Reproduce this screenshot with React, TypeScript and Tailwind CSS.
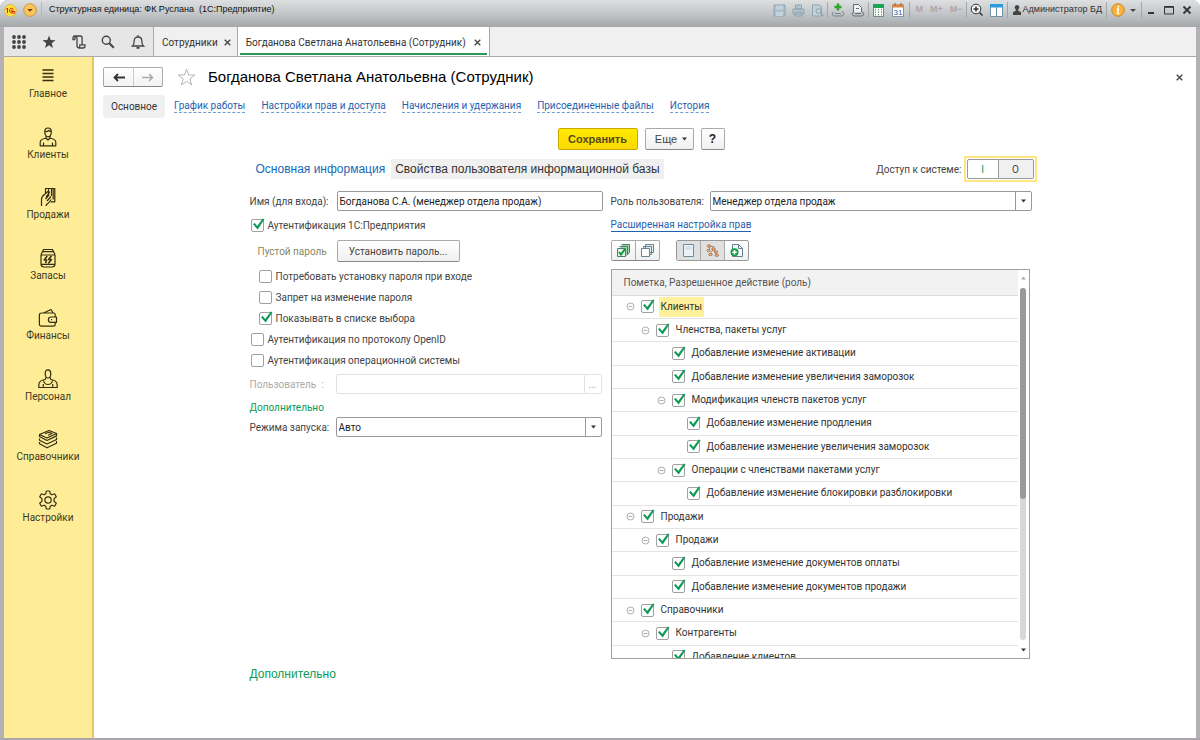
import { useId, useState } from 'react'
import type { ReactNode } from 'react'

type RoleRow = { level: number; text: string; group?: boolean; current?: boolean }

const roleRows: RoleRow[] = [
    { level: 0, text: 'Клиенты', group: true, current: true },
    { level: 1, text: 'Членства, пакеты услуг', group: true },
    { level: 2, text: 'Добавление изменение активации' },
    { level: 2, text: 'Добавление изменение увеличения заморозок' },
    { level: 2, text: 'Модификация членств пакетов услуг', group: true },
    { level: 3, text: 'Добавление изменение продления' },
    { level: 3, text: 'Добавление изменение увеличения заморозок' },
    { level: 2, text: 'Операции с членствами пакетами услуг', group: true },
    { level: 3, text: 'Добавление изменение блокировки разблокировки' },
    { level: 0, text: 'Продажи', group: true },
    { level: 1, text: 'Продажи', group: true },
    { level: 2, text: 'Добавление изменение документов оплаты' },
    { level: 2, text: 'Добавление изменение документов продажи' },
    { level: 0, text: 'Справочники', group: true },
    { level: 1, text: 'Контрагенты', group: true },
    { level: 2, text: 'Добавление клиентов' },
]

const indents = ['pl-[14px]', 'pl-[29px]', 'pl-[45px]', 'pl-[60px]']

const sections: { name: string; icon: ReactNode }[] = [
    { name: 'Главное', icon: <path d="M4.500 4h11M4.500 7.500h11M4.500 11h11M4.500 14.500h11" strokeWidth="1.600" /> },
    {
        name: 'Клиенты',
        icon: (
            <>
                <path d="M6.800 4.500C6.800 2 8 1 10 1s3.300 1.200 3.300 3.500C13.300 7.500 12 9.800 10 9.800S6.800 7.500 6.800 4.500z" />
                <path d="M7 4.500c1.500.3 3-.2 3.800-1.200.5.700 1.300 1 2.300 1.100M8 9v2.200M12 9v2.200M8 11.200c-3 .6-5.800 1-5.800 4v3.600h15.600v-3.600c0-3-2.800-3.400-5.800-4M8 11.200l2 1.800 2-1.800M5.500 15.500v3.300M14.500 15.500v3.300" />
            </>
        ),
    },
    {
        name: 'Продажи',
        icon: (
            <>
                <path d="M7.500 6V1.500h9.300v13.300h-4.300M10.500 1.500v7M13.500 1.500V9M15.200 1.500v11" />
                <path d="M3.500 19v-6.500c0-2.500 1.300-4 3.500-5.500l2.500-2.300c1.200-.8 2.200.3 1.500 1.400L8 10M11 8l-3.500 4M13 9.500l-4 4.500M13.200 12.500L10.500 16c-1.500 1-2.500 1.500-2.500 3" />
            </>
        ),
    },
    {
        name: 'Запасы',
        icon: (
            <>
                <path d="M5.500 1.500h9l1 2.200h-11zM4.500 3.700c-1 1.500-1.500 2-1.500 4V16c0 2 1 3 3 3h8c2 0 3-1 3-3V7.700c0-2-.5-2.500-1.500-4M3.500 7h13M3.500 16.300h13" />
                <path d="M9.200 8l-3 4h2.400l-1 3.200M13.500 7.800l-3 3.700h3l-3.200 4" strokeWidth="1.500" />
            </>
        ),
    },
    {
        name: 'Финансы',
        icon: (
            <>
                <path d="M4 5h11.500c1 0 1.700.7 1.700 1.700V9M17.200 14.300v2c0 1.200-.7 1.900-1.900 1.900H3.400c-1.300 0-2-.7-2-2V7c0-1.300.8-2 2.600-2M5.500 5l7.500-3.500L15 5" />
                <path d="M18.500 9H13a2.650 2.650 0 0 0 0 5.300h5.500zM13 11.600h1" />
            </>
        ),
    },
    {
        name: 'Персонал',
        icon: (
            <>
                <path d="M7.300 4C7.300 2 8.300.8 10 .8S12.700 2 12.700 4v1.500c0 2-1 3.500-2.700 3.500S7.300 7.500 7.300 5.500z" />
                <path d="M8 8.500l-.8 2C3 11 .8 13 .8 16v2.500h18.400V16c0-3-2.200-5-6.400-5.500l-.8-2M5.500 11.500C6 14 8 15.500 10 15.500s4-1.500 4.500-4M5.300 15v3.500M14.700 15v3.500" />
            </>
        ),
    },
    {
        name: 'Справочники',
        icon: (
            <path d="M1.500 5.500L11 1.500l7.500 3L9 9zM1.500 5.500v2L9 11.500l9.500-4.600V4.500M1.500 9.500v1.700L9 15l9.500-4.500V8.500M1.500 13v1.700L9 18.800l9.500-4.600V12M7 4.800l4-1.500 3 1.200-4 1.700" />
        ),
    },
    {
        name: 'Настройки',
        icon: (
            <>
                <path d="M8.300 1h3.400l.5 2.800 1.700 1 2.700-1 1.700 2.900-2.200 1.900v2.800l2.200 1.900-1.700 2.900-2.700-1-1.700 1-.5 2.800H8.300l-.5-2.800-1.700-1-2.700 1-1.700-2.900 2.200-1.900V8.600L1.700 6.700l1.700-2.900 2.700 1 1.700-1z" />
                <circle cx="10" cy="10" r="3.200" />
            </>
        ),
    },
]

const pageLinks = ['График работы', 'Настройки прав и доступа', 'Начисления и удержания', 'Присоединенные файлы', 'История']

function Divider() {
    return <span className="block h-4 w-px bg-[#a3a5a7]" />
}

function TitleBar() {
    return (
        <header className="flex h-[27px] shrink-0 items-start justify-between bg-linear-to-b from-[#dddfe0] via-[#c4c7c9] to-[#a4a7a9] pl-1 pr-2 font-['Liberation_Sans',Arial,sans-serif] text-[9px]">
            <div className="flex h-5 items-center">
                <svg className="h-[13px] w-[13px]" viewBox="0 0 13 13">
                    <circle cx="6.500" cy="6.500" r="6" fill="#ffe13a" stroke="#d9b85a" />
                    <path d="M2 5.500L3.500 4v5M9.500 5.300C8.800 3.800 5.500 3.800 5.500 6.400 5.500 8 6.500 9 8 9h3.300M9 6.600C8.700 5.700 7 5.700 7 6.700c0 .7.500.9 1 .9h3.300" fill="none" stroke="#d8261c" />
                </svg>
                <button aria-label="Меню" className="ml-[6px]">
                    <svg className="h-[14px] w-[14px]" viewBox="0 0 14 14">
                        <circle cx="7" cy="7" r="6.300" fill="#fcc55c" stroke="#c99345" />
                        <path d="M4.300 6h5.400L7 8.800z" fill="#6b3a10" />
                    </svg>
                </button>
                <span className="ml-1 h-4 w-px bg-[#b5b7b8]" />
                <span className="ml-[7px] whitespace-pre text-[#111]">Структурная единица: ФК Руслана  (1С:Предприятие)</span>
            </div>
            <div className="flex h-5 items-center">
                <div className="flex items-center gap-[6px]">
                    <button aria-label="Сохранить">
                        <svg className="h-[13px] w-[13px]" viewBox="0 0 13 13">
                            <path d="M1 1h11v11H1z" fill="#a9bfcb" stroke="#8aa3b1" />
                            <path d="M3 1.500h7v4H3zM3 8h7v4H3z" fill="#c3d2da" />
                        </svg>
                    </button>
                    <button aria-label="Печать">
                        <svg className="h-[13px] w-[13px]" viewBox="0 0 13 13" fill="#b6c4cd" stroke="#8fa3b0">
                            <path d="M3.500 1h6v4h-6zM1 5h11v5H1zM3 8h7v4H3z" />
                        </svg>
                    </button>
                    <button aria-label="Просмотр">
                        <svg className="h-[13px] w-[13px]" viewBox="0 0 13 13" fill="#c4d0d7" stroke="#8fa3b0">
                            <path d="M1.500 1h7l2 2v9h-9z" />
                            <circle cx="7.500" cy="7" r="2.500" />
                            <path d="M9.500 9l3 3" strokeWidth="1.500" />
                        </svg>
                    </button>
                </div>
                <div className="mx-[3px]"><Divider /></div>
                <div className="flex items-center gap-[6px]">
                    <button aria-label="Получить ссылку">
                        <svg className="h-[14px] w-[14px]" viewBox="0 0 14 14" fill="none" stroke="#74838d">
                            <path d="M3 9l-2 1.500L2.500 13h9l1.500-2.500L11 8M4 10.500h6" />
                            <path d="M7 .5v7M3.500 4h7" stroke="#2ea52e" strokeWidth="2.500" />
                        </svg>
                    </button>
                    <button aria-label="Перейти по ссылке">
                        <svg className="h-[14px] w-[14px]" viewBox="0 0 14 14" fill="none" stroke="#5f6e79">
                            <path d="M2.500 9V1.500h5l3 3V9" fill="#eef2f4" />
                            <path d="M3 9l-2 1.500L2.500 13h9l1.500-2.500L11 9M4 10.500h6M5 5.500h3" />
                        </svg>
                    </button>
                </div>
                <div className="mx-[3px]"><Divider /></div>
                <div className="flex items-center gap-[6px]">
                    <button aria-label="Калькулятор">
                        <svg className="h-[13px] w-[13px]" viewBox="0 0 13 13">
                            <path d="M1.500.5h10v12h-10z" fill="#f6faf7" stroke="#6d8f7b" />
                            <path d="M1 0h11v4H1z" fill="#1aa555" />
                            <path d="M3.500 5v7M6.500 5v7M9.500 5v7" stroke="#7c958a" strokeDasharray="1.500 1" />
                        </svg>
                    </button>
                    <button aria-label="Календарь">
                        <svg className="h-[14px] w-[14px]" viewBox="0 0 14 14">
                            <path d="M1.500 2h11v11.500h-11z" fill="#fff" stroke="#7f95ab" />
                            <path d="M1 1.500h12v3H1z" fill="#d98647" />
                            <path d="M4 0v2.500M10 0v2.500" stroke="#8b5a35" />
                            <text x="7" y="12" textAnchor="middle" fontSize="8" fill="#23639b">31</text>
                        </svg>
                    </button>
                </div>
                <div className="ml-1 mr-[6px]"><Divider /></div>
                <div className="flex items-center gap-[7px] font-bold text-[#b3a4a4]">
                    <button>M</button>
                    <button>M+</button>
                    <button>M−</button>
                </div>
                <div className="mx-[3px]"><Divider /></div>
                <div className="flex items-center gap-[6px]">
                    <button aria-label="Масштаб">
                        <svg className="h-[14px] w-[14px]" viewBox="0 0 14 14" fill="none" stroke="#333">
                            <circle cx="6" cy="6" r="4.800" fill="#f4f4f4" />
                            <path d="M3.500 6h5M6 3.500v5M9.500 9.500l3 3" strokeWidth="1.500" />
                        </svg>
                    </button>
                    <button aria-label="Панели">
                        <svg className="h-[13px] w-[13px]" viewBox="0 0 13 13">
                            <path d="M.5.500h12v12H.5z" fill="#fff" stroke="#6f93ab" />
                            <path d="M0 0h13v3.500H0z" fill="#2c9be0" />
                            <path d="M6.500 3v10" stroke="#6f93ab" />
                        </svg>
                    </button>
                </div>
                <div className="mx-1"><Divider /></div>
                <svg className="h-[10px] w-[10px]" viewBox="0 0 10 10" fill="#444">
                    <path d="M5 0a2.300 2.300 0 0 1 1.300 4.200V6L9 7v3H1V7l2.700-1V4.200A2.300 2.300 0 0 1 5 0z" />
                </svg>
                <span className="ml-px text-[#33302e]">Администратор БД</span>
                <div className="mx-1"><Divider /></div>
                <button aria-label="О программе">
                    <svg className="h-[14px] w-[14px]" viewBox="0 0 14 14">
                        <circle cx="7" cy="7" r="6.300" fill="#f9b13c" stroke="#c9882d" />
                        <path d="M7.500 2.800v1.800M5.800 6h1.500L6.500 10.500h1.800" fill="none" stroke="#fff" strokeWidth="1.500" />
                    </svg>
                </button>
                <svg className="ml-1 h-[6px] w-[8px]" viewBox="0 0 8 6" fill="#444">
                    <path d="M1 2h6L4 5z" />
                </svg>
                <div className="mx-1"><Divider /></div>
                <div className="flex items-center gap-2">
                    <button aria-label="Свернуть">
                        <svg className="h-[10px] w-[10px]" viewBox="0 0 10 10"><path d="M2 8h6" stroke="#333" strokeWidth="1.800" /></svg>
                    </button>
                    <button aria-label="Развернуть">
                        <svg className="h-[10px] w-[10px]" viewBox="0 0 10 10"><path d="M.5 1.500h9v7.500h-9zM.5 2.300h9" fill="none" stroke="#333" /></svg>
                    </button>
                    <button aria-label="Закрыть">
                        <svg className="h-[10px] w-[10px]" viewBox="0 0 10 10"><path d="M1.500 1.500l7 7M8.500 1.500l-7 7" stroke="#333" strokeWidth="1.800" /></svg>
                    </button>
                </div>
            </div>
        </header>
    )
}

function CloseIcon() {
    return (
        <svg className="h-[7px] w-[7px]" viewBox="0 0 7 7">
            <path d="M.7.700l5.600 5.600M6.300.700L.7 6.300" stroke="#444" strokeWidth="1.300" />
        </svg>
    )
}

function TabBar() {
    return (
        <nav className="flex h-[30px] shrink-0 border-b border-[#a9a9a9] bg-[#f0f0f0]">
            <div className="flex w-[149px] items-center justify-between bg-[#e6e6e6] pl-2 pr-2 text-[#444]">
                <button aria-label="Разделы">
                    <svg className="h-[14px] w-[14px]" viewBox="0 0 14 14" fill="#444">
                        {[2, 7, 12].map((y) => [2, 7, 12].map((x) => <circle key={`${x}-${y}`} cx={x} cy={y} r="1.900" />))}
                    </svg>
                </button>
                <button aria-label="Избранное">
                    <svg className="h-[14px] w-[14px]" viewBox="0 0 14 14" fill="#444">
                        <path d="M7 .5l1.700 4.600 4.800.1-3.800 3 1.300 4.800-4-2.800L3 13l1.300-4.800-3.800-3 4.800-.1z" />
                    </svg>
                </button>
                <button aria-label="История">
                    <svg className="h-[14px] w-[14px]" viewBox="0 0 14 14" fill="none" stroke="#444" strokeWidth="1.300">
                        <path d="M3 4.500H1V3c0-1.200.7-2 2-2h5.500M3 4.500V3c0-1 .6-1.300 1-1.300S5 2 5 3v7.500C5 12 6 13 7.500 13H11c1.200 0 2-.8 2-2V9.800H7.800V11c0 1.200-.5 2-1.300 2M8.500 1c1 0 1.600.8 1.600 2v6.500" />
                    </svg>
                </button>
                <button aria-label="Поиск">
                    <svg className="h-[14px] w-[14px]" viewBox="0 0 14 14" fill="none" stroke="#444">
                        <circle cx="5.300" cy="5.300" r="4" strokeWidth="1.400" />
                        <path d="M8.300 8.300l4.500 4.500" strokeWidth="2" />
                    </svg>
                </button>
                <button aria-label="Оповещения">
                    <svg className="h-[14px] w-[14px]" viewBox="0 0 14 14" fill="none" stroke="#444" strokeWidth="1.300">
                        <path d="M1.500 11c1.500-1.300 1.700-2.500 1.700-5.200C3.200 3.500 4.800 2 7 2s3.800 1.500 3.800 3.800c0 2.700.2 3.900 1.700 5.200zM7 0v2" />
                        <path d="M5.500 12.800h3" strokeWidth="1.800" />
                    </svg>
                </button>
            </div>
            <div className="flex items-center gap-[6px] border-l border-[#a9a9a9] pl-2 pr-[6px] pt-[2px]">
                <a href="#" className="text-[#333]">Сотрудники</a>
                <button aria-label="Закрыть вкладку"><CloseIcon /></button>
            </div>
            <div className="border-x border-[#a9a9a9] bg-white px-[2px] pb-px">
                <div className="flex h-full items-center gap-2 border-b-2 border-[#279a57] px-[6px] pt-1">
                    <a href="#" className="text-[#333]">Богданова Светлана Анатольевна (Сотрудник)</a>
                    <button aria-label="Закрыть вкладку"><CloseIcon /></button>
                </div>
            </div>
        </nav>
    )
}

function Sidebar() {
    return (
        <aside className="w-[90px] shrink-0 border-r-2 border-[#e3c766] bg-[#ffec96]">
            <ul className="grid h-[493px] grid-rows-8 pt-[9px]">
                {sections.map((s) => (
                    <li key={s.name}>
                        <a href="#" className="flex flex-col items-center text-[#3d3a22]">
                            <svg className="h-5 w-5" viewBox="0 0 20 20" fill="none" stroke="#332e12" strokeWidth="1.200" strokeLinejoin="round">
                                {s.icon}
                            </svg>
                            <span className="leading-4">{s.name}</span>
                        </a>
                    </li>
                ))}
            </ul>
        </aside>
    )
}

function Check({ id, checked = false }: { id: string; checked?: boolean }) {
    const [on, setOn] = useState(checked)

    return (
        <span className="relative block h-[13px] w-[13px] shrink-0">
            <input
                id={id}
                type="checkbox"
                checked={on}
                onChange={() => setOn(!on)}
                className="block h-[13px] w-[13px] appearance-none rounded-xs border border-[#a0a0a0] bg-white"
            />
            {on && (
                <svg className="pointer-events-none absolute -top-[2px] left-0 h-[15px] w-[15px]" viewBox="0 0 15 15">
                    <path d="M2 7.300l1.800-1.200 2.400 2.800L11.800 1.500l1.700.8L6.700 12.500z" fill="#0d9a55" />
                </svg>
            )}
        </span>
    )
}

function CheckRow({ text, checked, nested }: { text: string; checked?: boolean; nested?: boolean }) {
    const id = useId()

    return (
        <div className={`flex h-[21px] items-center gap-1 ${nested ? 'pl-[9px]' : 'pl-px'}`}>
            <Check id={id} checked={checked} />
            <label htmlFor={id}>{text}</label>
        </div>
    )
}

function SelectBox({ id, value }: { id: string; value: string }) {
    return (
        <div className="relative min-w-0 flex-1">
            <select id={id} className="block h-5 w-full appearance-none rounded-xs border border-[#999] bg-white pl-[2px] text-[#222]">
                <option>{value}</option>
            </select>
            <span className="pointer-events-none absolute inset-y-0 right-0 flex w-[17px] items-center justify-center border-l border-[#999]">
                <svg className="h-1 w-[5px]" viewBox="0 0 5 4" fill="#333"><path d="M0 .5h5L2.500 3.500z" /></svg>
            </span>
        </div>
    )
}

function LoginForm() {
    return (
        <div className="flex w-[353px] flex-col">
            <div className="flex h-5 items-center">
                <label htmlFor="login" className="w-[87px]">Имя (для входа):</label>
                <input
                    id="login"
                    defaultValue="Богданова С.А. (менеджер отдела продаж)"
                    className="h-5 min-w-0 flex-1 rounded-xs border border-[#999] px-[2px] text-[#222]"
                />
            </div>
            <div className="pt-1"><CheckRow text="Аутентификация 1С:Предприятия" checked /></div>
            <div className="flex items-center py-1 pl-2">
                <span className="w-[79px] text-[#8a8663]">Пустой пароль</span>
                <button className="h-[22px] w-[123px] rounded-xs border border-[#aaa] border-b-[#888] bg-linear-to-b from-white to-[#f0f0f0]">
                    Установить пароль...
                </button>
            </div>
            <CheckRow text="Потребовать установку пароля при входе" nested />
            <CheckRow text="Запрет на изменение пароля" nested />
            <CheckRow text="Показывать в списке выбора" nested checked />
            <CheckRow text="Аутентификация по протоколу OpenID" />
            <CheckRow text="Аутентификация операционной системы" />
            <div className="mt-[3px] flex items-center pr-px text-[#aaa]">
                <label htmlFor="osuser" className="w-[86px] whitespace-pre">Пользователь  :</label>
                <input id="osuser" disabled className="h-5 min-w-0 flex-1 rounded-l-xs border border-[#e2e2e2]" />
                <button disabled className="h-5 w-[17px] rounded-r-xs border border-l-0 border-[#e2e2e2]">...</button>
            </div>
            <h3 className="mt-[6px] leading-4 text-[#0b9a55]">Дополнительно</h3>
            <div className="mt-px flex items-center pr-px">
                <label htmlFor="mode" className="w-[86px] whitespace-nowrap">Режима запуска:</label>
                <SelectBox id="mode" value="Авто" />
            </div>
        </div>
    )
}

function RolesToolbar() {
    return (
        <div className="flex gap-4">
            <div className="flex h-[21px] rounded-xs border border-[#aaa] border-b-[#888] bg-linear-to-b from-white to-[#f0f0f0]">
                <button aria-label="Установить флажки" className="flex w-[23px] items-center justify-center">
                    <svg className="h-[13px] w-[13px]" viewBox="0 0 13 13">
                        <path d="M4.500.5h8v8l-3 3M2.500 2.500h8v8" fill="#9fd3b0" stroke="#4c7f68" />
                        <path d="M.5 4.500h8v8h-8z" fill="#e8f5ea" stroke="#4c7f68" />
                        <path d="M2 8l2 2.500L8 5" fill="none" stroke="#0b9a3c" strokeWidth="2" />
                    </svg>
                </button>
                <button aria-label="Снять флажки" className="flex w-6 items-center justify-center border-l border-[#aaa]">
                    <svg className="h-[13px] w-[13px]" viewBox="0 0 13 13" fill="#e3edf2" stroke="#668494">
                        <path d="M4.500.5h8v8h-8zM2.500 2.500h8v8h-8z" />
                        <path d="M.5 4.500h8v8h-8z" fill="#fff" />
                    </svg>
                </button>
            </div>
            <div className="flex h-[21px] rounded-xs border border-[#999] bg-linear-to-b from-white to-[#f0f0f0]">
                <button aria-label="Только выбранные" className="flex w-[23px] items-center justify-center bg-[#e0e0e0]">
                    <svg className="h-[13px] w-[13px]" viewBox="0 0 13 13">
                        <path d="M1.500.5h10v12h-10z" fill="#edf4f8" stroke="#6c8da1" />
                        <path d="M3.500 3h6M3.500 5h6" stroke="#b9cfdc" />
                    </svg>
                </button>
                <button aria-label="По подсистемам" className="flex w-6 items-center justify-center border-l border-[#aaa] bg-[#e0e0e0]">
                    <svg className="h-[13px] w-[13px]" viewBox="0 0 13 13" fill="#e8b48a" stroke="#a8693a" strokeWidth=".8">
                        <path d="M4 2.500h3.500v3M7 6L4 9.500M8 6l3 4.500M3.500 3v3" fill="none" />
                        <ellipse cx="3" cy="2" rx="1.800" ry="1.200" />
                        <ellipse cx="7.500" cy="5" rx="1.800" ry="1.200" />
                        <ellipse cx="2.500" cy="6.500" rx="1.600" ry="1.100" />
                        <ellipse cx="4.500" cy="10.500" rx="1.800" ry="1.200" />
                        <ellipse cx="10.800" cy="11.200" rx="1.800" ry="1.200" />
                        <ellipse cx="10" cy="8" rx="1.600" ry="1.100" />
                    </svg>
                </button>
                <button aria-label="Добавить роль" className="flex w-6 items-center justify-center border-l border-[#aaa]">
                    <svg className="h-[13px] w-[13px]" viewBox="0 0 13 13">
                        <path d="M2.500.5h6l4 4v8h-10z" fill="#f5f8fa" stroke="#67808e" />
                        <path d="M8.500.5v4h4" fill="none" stroke="#67808e" />
                        <circle cx="4.500" cy="8.300" r="4" fill="#12a043" />
                        <path d="M4.500 6v4.600M2.200 8.300h4.600" stroke="#fff" strokeWidth="1.500" />
                    </svg>
                </button>
            </div>
        </div>
    )
}

function RolesTable() {
    return (
        <div className="flex h-[390px] w-[419px] overflow-hidden border border-[#a0a0a0]">
            <div className="min-w-0 flex-1 overflow-hidden">
                <table className="h-[399px] w-full border-collapse">
                    <thead>
                        <tr className="h-[25px] border-b border-[#dcdcdc] bg-[#f2f2f2]">
                            <th className="p-0 pl-3 text-left font-normal text-[#555]">Пометка, Разрешенное действие (роль)</th>
                        </tr>
                    </thead>
                    <tbody>
                        {roleRows.map((row, i) => (
                            <tr key={i} className="border-b border-[#e4e4e4]">
                                <td className="p-0">
                                    <div className={`flex items-center ${indents[row.level]}`}>
                                        <span className="mr-[6px] flex w-[9px]">
                                            {row.group && (
                                                <svg className="h-[9px] w-[9px]" viewBox="0 0 9 9" fill="none" stroke="#999" strokeWidth=".8">
                                                    <circle cx="4.500" cy="4.500" r="3.500" />
                                                    <path d="M2.500 4.500h4" />
                                                </svg>
                                            )}
                                        </span>
                                        <Check id={`role-${i}`} checked />
                                        <label
                                            htmlFor={`role-${i}`}
                                            className={`ml-[5px] px-[2px] leading-5 text-[#333] ${row.current ? 'bg-[#fff09c]' : ''}`}
                                        >
                                            {row.text}
                                        </label>
                                    </div>
                                </td>
                            </tr>
                        ))}
                    </tbody>
                </table>
            </div>
            <div className="flex w-[11px] flex-col items-center justify-between py-[6px]">
                <svg className="h-1 w-[5px]" viewBox="0 0 5 4" fill="#aaa"><path d="M0 3.500h5L2.500.5z" /></svg>
                <div className="my-2 w-[6px] flex-1 rounded-full bg-[#d8d8d8]">
                    <div className="h-3/5 rounded-full bg-[#9a9a9a]" />
                </div>
                <svg className="h-1 w-[5px]" viewBox="0 0 5 4" fill="#333"><path d="M0 .5h5L2.500 3.500z" /></svg>
            </div>
        </div>
    )
}

export default function App() {
    return (
        <div className="flex min-h-screen flex-col overflow-hidden rounded-t-lg border-b-2 border-[#a9a7ac] bg-[#a9abad] font-[Roboto,'Liberation_Sans',sans-serif] text-[10px] text-[#444]">
            <TitleBar />
            <div className="flex flex-1 flex-col border-x-4 border-[#b3b1b5] bg-white">
                <TabBar />
                <div className="flex flex-1">
                    <Sidebar />
                    <main className="min-w-0 flex-1 pl-[9px] pr-[13px] pt-[10px]">
                        <div className="flex h-5 items-center">
                            <div className="flex h-5 rounded-xs border border-[#aaa] border-b-[#888] bg-linear-to-b from-white to-[#f2f2f2]">
                                <button aria-label="Назад" className="flex w-[29px] items-center justify-center">
                                    <svg className="h-[9px] w-3" viewBox="0 0 12 9"><path d="M12 4.500H2M5 1L1.500 4.500 5 8" fill="none" stroke="#333" strokeWidth="1.800" /></svg>
                                </button>
                                <button aria-label="Вперед" className="flex w-[29px] items-center justify-center border-l border-[#ccc]">
                                    <svg className="h-[9px] w-3" viewBox="0 0 12 9"><path d="M0 4.500h10M7 1l3.500 3.500L7 8" fill="none" stroke="#aaa" strokeWidth="1.500" /></svg>
                                </button>
                            </div>
                            <button aria-label="В избранное" className="ml-[14px]">
                                <svg className="h-[19px] w-[19px]" viewBox="0 0 19 19" fill="none" stroke="#b5b5b5">
                                    <path d="M9.500 1l2.100 6h6.200l-5 3.800 1.900 6.200-5.200-3.700L4.300 17l1.900-6.200-5-3.800h6.200z" />
                                </svg>
                            </button>
                            <h1 className="ml-3 font-['Liberation_Sans',Arial,sans-serif] text-[15px] text-black">Богданова Светлана Анатольевна (Сотрудник)</h1>
                            <button aria-label="Закрыть" className="ml-auto"><CloseIcon /></button>
                        </div>

                        <nav className="mt-2 flex h-[23px] items-center gap-4">
                            <a href="#" className="-mr-[7px] flex h-[23px] items-center rounded-sm bg-[#f0f0f0] px-2 text-[#333]">Основное</a>
                            {pageLinks.map((link) => (
                                <a key={link} href="#" className="border-b border-dashed border-[#6f9bd0] leading-3 text-[#1f62b0]">{link}</a>
                            ))}
                        </nav>

                        <div className="mt-[10px] flex h-[22px] justify-center gap-[7px] pr-1 font-['Liberation_Sans',Arial,sans-serif] text-[11px]">
                            <button className="w-20 rounded-xs border border-[#c9a800] bg-linear-to-b from-[#ffea00] to-[#fbd900] font-bold text-[#54491a]">Сохранить</button>
                            <button className="flex w-[49px] items-center justify-center gap-[5px] rounded-xs border border-[#aaa] border-b-[#888] bg-linear-to-b from-white to-[#f0f0f0] pl-1">
                                Еще
                                <svg className="h-1 w-[5px]" viewBox="0 0 5 4" fill="#333"><path d="M0 .5h5L2.500 3.500z" /></svg>
                            </button>
                            <button className="w-6 rounded-xs border border-[#aaa] border-b-[#888] bg-linear-to-b from-white to-[#f0f0f0] text-[12px] font-bold text-[#222]">?</button>
                        </div>

                        <section className="mx-auto w-full max-w-[787px]">
                            <div className="mt-[6px] flex h-[26px] items-center">
                                <div className="flex items-center font-['Liberation_Sans',Arial,sans-serif] text-[12px] leading-5">
                                    <a href="#" className="px-[6px] text-[#1769b8]">Основная информация</a>
                                    <h2 className="bg-[#f0f0f0] px-1 text-[#333]">Свойства пользователя информационной базы</h2>
                                </div>
                                <span className="ml-auto">Доступ к системе:</span>
                                <div className="ml-[2px] flex border-2 border-[#ffe680] p-px">
                                    <button className="h-5 w-8 rounded-l-xs border border-[#999] bg-white text-[#0b9a55]">I</button>
                                    <button className="h-5 w-[35px] rounded-r-xs border border-l-0 border-[#999] bg-[#f0f0f0]">O</button>
                                </div>
                            </div>
                            <div className="mt-[9px] flex gap-2">
                                <LoginForm />
                                <div className="min-w-0">
                                    <div className="flex w-[421px] items-center">
                                        <label htmlFor="role" className="w-[99px] whitespace-nowrap">Роль пользователя:</label>
                                        <SelectBox id="role" value="Менеджер отдела продаж" />
                                    </div>
                                    <div className="flex h-[29px] items-center">
                                        <a href="#" className="border-b border-[#1f62b0] leading-3 text-[#1f62b0]">Расширенная настройка прав</a>
                                    </div>
                                    <RolesToolbar />
                                    <div className="mt-2"><RolesTable /></div>
                                </div>
                            </div>
                            <h3 className="mt-[5px] font-['Liberation_Sans',Arial,sans-serif] text-[12px] leading-5 text-[#0b9a55]">Дополнительно</h3>
                        </section>
                    </main>
                </div>
            </div>
        </div>
    )
}
